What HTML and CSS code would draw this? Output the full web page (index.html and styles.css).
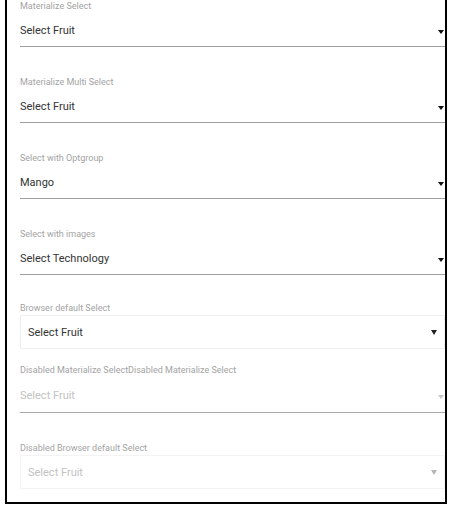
FILE: index.html
```html
<!DOCTYPE html>
<html>
<head>
<meta charset="utf-8">
<link rel="stylesheet" href="styles.css">
</head>
<body>
<div class="frame">
  <div class="field">
    <div class="label">Materialize Select</div>
    <div class="mselect"><span>Select Fruit</span><span class="caret"></span></div>
  </div>
  <div class="field">
    <div class="label">Materialize Multi Select</div>
    <div class="mselect"><span>Select Fruit</span><span class="caret"></span></div>
  </div>
  <div class="field">
    <div class="label">Select with Optgroup</div>
    <div class="mselect"><span>Mango</span><span class="caret"></span></div>
  </div>
  <div class="field tight">
    <div class="label">Select with images</div>
    <div class="mselect"><span>Select Technology</span><span class="caret"></span></div>
  </div>
  <div class="field browser-field">
    <div class="label flush">Browser default Select</div>
    <div class="bselect"><span>Select Fruit</span><span class="bcaret"></span></div>
  </div>
  <div class="field">
    <div class="label">Disabled Materialize SelectDisabled Materialize Select</div>
    <div class="mselect disabled"><span>Select Fruit</span><span class="caret"></span></div>
  </div>
  <div class="field last">
    <div class="label flush">Disabled Browser default Select</div>
    <div class="bselect disabled"><span>Select Fruit</span><span class="bcaret"></span></div>
  </div>
</div>
</body>
</html>
```
FILE: styles.css
```css
html, body {
  margin: 0;
  padding: 0;
  background: #fff;
}
body {
  font-family: Roboto, "Liberation Sans", sans-serif;
}
.frame {
  box-sizing: border-box;
  width: 442px;
  margin-left: 5px;
  border: 2px solid #000;
  border-top: 0;
  padding: 0 0 13px 13px;
}
.field {
  margin-bottom: 29px;
}
.field.tight {
  margin-bottom: 27px;
}
.field.browser-field {
  margin-bottom: 15px;
}
.field.last {
  margin-bottom: 0;
}
.label {
  font-size: 9px;
  line-height: 13px;
  color: #a3a3a3;
  margin-bottom: 1px;
  white-space: nowrap;
}
.label.flush {
  margin-bottom: 0;
}
.mselect {
  box-sizing: border-box;
  height: 33px;
  border-bottom: 1px solid #9e9e9e;
  display: flex;
  align-items: center;
  justify-content: space-between;
  font-size: 11px;
  color: #333;
}
.caret {
  width: 0;
  height: 0;
  border-left: 3px solid transparent;
  border-right: 3px solid transparent;
  border-top: 4px solid #111;
  margin-right: 1px;
  margin-top: 3px;
}
.mselect.disabled {
  height: 35px;
  color: #c2c2c2;
  border-bottom-color: #a8a8a8;
}
.mselect.disabled .caret {
  border-top-color: #c8c8c8;
}
.bselect {
  box-sizing: border-box;
  height: 34px;
  border: 1px solid #f0f0f0;
  display: flex;
  align-items: center;
  justify-content: space-between;
  padding: 0 7px 0 7px;
  font-size: 11px;
  color: #333;
}
.bcaret {
  width: 0;
  height: 0;
  border-left: 3px solid transparent;
  border-right: 3px solid transparent;
  border-top: 5px solid #222;
}
.bselect.disabled {
  color: #c2c2c2;
  border-color: #f3f3f3;
}
.bselect.disabled .bcaret {
  border-top-color: #b5b5b5;
}
```
